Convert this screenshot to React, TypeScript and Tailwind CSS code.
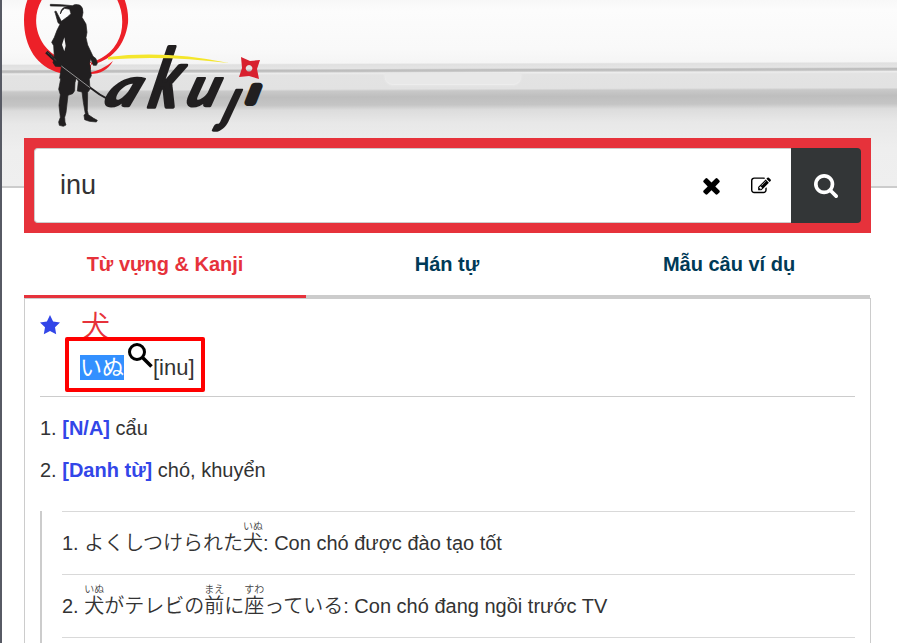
import React from "react";

const SANS = "font-['Liberation_Sans','Noto_Sans_CJK_JP',sans-serif]";

function Logo() {
  return (
    <svg className="block h-[138px] w-[245px]" viewBox="24 0 245 138" role="img" aria-label="akuji">
      <path
        fill="#ed2028"
        fillRule="evenodd"
        d="M24 20C24 47 37 67 60 73L91 69L91 62Q60 66 44 45C28 22 37 -8 65 -20L60 -30C38 -24 24 -5 24 20ZM90 63Q115 55 121 33C125 15 119 -3 108 -12L114 -18C124 -7 129 8 128 23C125 45 112 61 90 65Z"
      />
      <path fill="#ed2028" d="M88 73Q103 70 113 61Q105 75 88 74Z" />
      <g transform="scale(.33333)" fill="#211f20" stroke="#211f20" strokeWidth="2" strokeLinejoin="round">
        <path d="M151 13L184 14L217 17Q225 11 239 15Q250 22 249 38L246 52L258 72L261 97L258 113L263 135L279 169L288 176L292 190L289 196L280 196L272 176L269 190L274 227L268 238L270 268L263 277L262 332L265 344L281 355L292 361L289 366L268 364L254 359L252 346L256 341L250 307L246 276L232 273L235 244L229 234L225 248L224 272L218 281L204 286L198 338L194 352L195 366L198 375L190 379L178 376L176 366L181 352L177 316L181 284L176 268L182 237L179 235L184 200L166 199L159 188L163 173L161 137L155 127L163 112L171 91L180 73L174 68L166 40L164 35L168 33L184 64L203 50L213 41L209 28L194 25Q184 30 181 42Q182 27 193 22L205 19L151 18Z" />
        <path fill="#f2f2f2" stroke="none" d="M193 112L186 134L193 154L197 137Z" />
        <path d="M139 156L169 184" strokeWidth="10" />
        <path d="M140 155L169 182" stroke="#777" strokeDasharray="3 3" />
        <path d="M184 197L272 264Q298 285 325 298" fill="none" strokeWidth="6" />
        <path d="M184 198L270 263" stroke="#aaa" strokeWidth="2.5" />
      </g>
      <g
        fill="#211f20"
        stroke="#211f20"
        strokeWidth="2.4"
        strokeLinejoin="round"
        strokeLinecap="round"
        className="font-['Lato','Liberation_Sans',sans-serif] text-[54px] font-bold italic"
      >
        <text transform="translate(102 106) skewX(-24) scale(1.16 1)">a</text>
        <text transform="translate(147 107) skewX(-14) scale(1.06 1.5)">k</text>
        <text transform="translate(184 106) skewX(-18) scale(1.08 1)">u</text>
        <text transform="translate(221 120) skewX(-20) scale(.9 1.08)">ȷ</text>
        <text transform="translate(248 102) skewX(-10)" strokeWidth="8" className="font-['Open_Sans','Liberation_Sans',sans-serif] text-[28px]">ı</text>
      </g>
      <path fill="#f4e62b" d="M108 57Q165 50 229 63Q166 55 108 59.5Z" />
      <path fill="#d8202e" fillRule="evenodd" d="M241 57L250 61L260 60L257 69L259 79L249 76L239 77L242 68ZM249 65A3.3 3.3 0 1 0 249.1 65Z" />
    </svg>
  );
}

function ClearIcon() {
  return (
    <svg className="h-[25px] w-[25px]" viewBox="0 0 1792 1792">
      <path d="M1490 1322q0 40-28 68l-136 136q-28 28-68 28t-68-28l-294-294-294 294q-28 28-68 28t-68-28l-136-136q-28-28-28-68t28-68l294-294-294-294q-28-28-28-68t28-68l136-136q28-28 68-28t68 28l294 294 294-294q28-28 68-28t68 28l136 136q28 28 28 68t-28 68l-294 294 294 294q28 28 28 68z" />
    </svg>
  );
}

function EditIcon() {
  return (
    <svg className="h-5 w-5" viewBox="0 0 1792 1792">
      <path d="M888 1184l116-116-152-152-116 116v56h96v96h56zm440-720q-16-16-33 1l-350 350q-17 17-1 33t33-1l350-350q17-17 1-33zm80 594v190q0 119-84.5 203.5t-203.5 84.5h-832q-119 0-203.5-84.5t-84.5-203.5v-832q0-119 84.5-203.5t203.5-84.5h832q63 0 117 25 15 7 18 23 3 17-9 29l-49 49q-14 14-32 8-23-6-45-6h-832q-66 0-113 47t-47 113v832q0 66 47 113t113 47h832q66 0 113-47t47-113v-126q0-13 9-22l64-64q15-15 35-7t20 29zm-96-738l288 288-672 672h-288v-288zm444 132l-92 92-288-288 92-92q28-28 68-28t68 28l152 152q28 28 28 68t-28 68z" />
    </svg>
  );
}

function SearchIcon() {
  return (
    <svg className="h-[26px] w-6 fill-white" viewBox="0 64 1664 1792">
      <path d="M1152 832q0-185-131.5-316.5T704 384 387.5 515.5 256 832t131.5 316.5T704 1280t316.5-131.5T1152 832zm512 832q0 52-38 90t-90 38q-54 0-90-38l-343-342q-179 124-399 124-143 0-273.5-55.5t-225-150-150-225T0 832t55.5-273.5 150-225 225-150T704 128t273.5 55.5 225 150 150 225T1408 832q0 220-124 399l343 343q37 37 37 90z" />
    </svg>
  );
}

function Ruby({ base, reading }: { base: string; reading: string }) {
  return (
    <span className="relative">
      {base}
      <span className="absolute -top-[12px] left-0 text-[10px] leading-[14px] whitespace-nowrap text-[#444]">{reading}</span>
    </span>
  );
}

function Example({ children }: { children: React.ReactNode }) {
  return (
    <li className="flex h-[63px] items-baseline border-t border-[#d9d9d9] pt-5 text-xl leading-[22px] whitespace-pre">
      {children}
    </li>
  );
}

export default function App() {
  return (
    <div className={`${SANS} h-[643px] w-[897px] overflow-hidden border-l-2 border-[#575a64] bg-white text-[#333]`}>
      <div className="h-[188px] border-b-2 border-[#ccc] bg-[linear-gradient(179.84deg,#f7f7f7_0px,#fcfcfc_12px,#f9f9f9_50px,#f5f5f5_64px,#e0e0e0_65.5px,#e4e4e4_69.5px,#bcbcbc_71px,#c2c2c2_72.5px,#ededed_74px,#e3e3e3_76px,#e2e2e2_90px,#c9c9c9_92px,#bebebe_98px,#c5c5c5_106px,#dcdcdc_111px,#e8e8e8_124px,#eeeeee_150px,#efefef_188px)]">
        <header className="flex h-[138px] pl-[22px]">
          <Logo />
          <div className="mt-[73px] ml-[116px] h-[11px] w-[136px] rounded-b-lg bg-[#e8e8e8] shadow-[0_1px_2px_#f0f0f0]" />
        </header>
        <main className="ml-[22px] w-[847px]">
          <div className="flex h-[95px] bg-[#e6323b] p-[10px]">
            <div className="flex h-[75px] flex-1 items-center rounded-l-[4px] border border-r-0 border-[#ccc] bg-white pl-[25px]">
              <span className="flex-1 pb-px text-[27px] leading-9">inu</span>
              <ClearIcon />
              <span className="mr-5 ml-[27px]"><EditIcon /></span>
            </div>
            <button className="flex w-[70px] items-center justify-center rounded-r-[4px] bg-[#333637]" aria-label="Search">
              <SearchIcon />
            </button>
          </div>
          <nav className="grid h-[65px] w-[846px] grid-cols-3 text-center text-xl leading-[62px] font-bold text-[#003a57]">
            <div className="border-b-[3px] border-[#e6323b] text-[#e6323b]">Từ vựng &amp; Kanji</div>
            <div className="border-b-[3px] border-[#ccc]">Hán tự</div>
            <div className="border-b-[3px] border-[#ccc]">Mẫu câu ví dụ</div>
          </nav>
          <section className="h-[360px] border border-[#ccc] px-[15px]">
            <div className="relative flex h-[98px] border-b border-[#ccc]">
              <svg className="mt-4 h-5 w-5 fill-[#3246e8]" viewBox="0 0 20 20">
                <path d="M10 0L13.1 6.4L20 7.4L15 12.3L16.2 19.3L10 16L3.8 19.3L5 12.3L0 7.4L6.9 6.4Z" />
              </svg>
              <div className="ml-5">
                <div className="h-[56px] pt-[13px] pl-px text-[29px] leading-[30px] font-[350] text-[#e6323b]">犬</div>
                <div className="flex h-[25px] text-[22px] leading-[25px]">
                  <span className="w-11 bg-[#3390ff] text-white">いぬ</span>
                  <svg className="-mt-[13px] ml-1 h-[26px] w-[25px] fill-none stroke-black" viewBox="0 0 25 26">
                    <circle cx="9" cy="10" r="7.5" strokeWidth="3" />
                    <path d="M14.5 15.5L23.5 24.5" strokeWidth="3.6" />
                  </svg>
                  <span>[inu]</span>
                </div>
              </div>
              <div className="absolute top-[38px] left-[25px] h-[55px] w-[140px] rounded-[2px] border-4 border-[#ff0000]" />
            </div>
            <ol className="pt-5 text-xl leading-[22px]">
              <li className="mb-5">1. <b className="text-[#3246e8]">[N/A]</b> cẩu</li>
              <li>2. <b className="text-[#3246e8]">[Danh từ]</b> chó, khuyển</li>
            </ol>
            <ol className="mt-[30px] h-[140px] border-l-2 border-[#ccc] pl-5">
              <Example>
                <span>1. </span><span className="font-[350]">よくしつけられた<Ruby base="犬" reading="いぬ" /></span><span>: Con chó được đào tạo tốt</span>
              </Example>
              <Example>
                <span>2. </span><span className="font-[350]"><Ruby base="犬" reading="いぬ" />がテレビの<Ruby base="前" reading="まえ" />に<Ruby base="座" reading="すわ" />っている</span><span>: Con chó đang ngồi trước TV</span>
              </Example>
              <Example>{""}</Example>
            </ol>
          </section>
        </main>
      </div>
    </div>
  );
}
